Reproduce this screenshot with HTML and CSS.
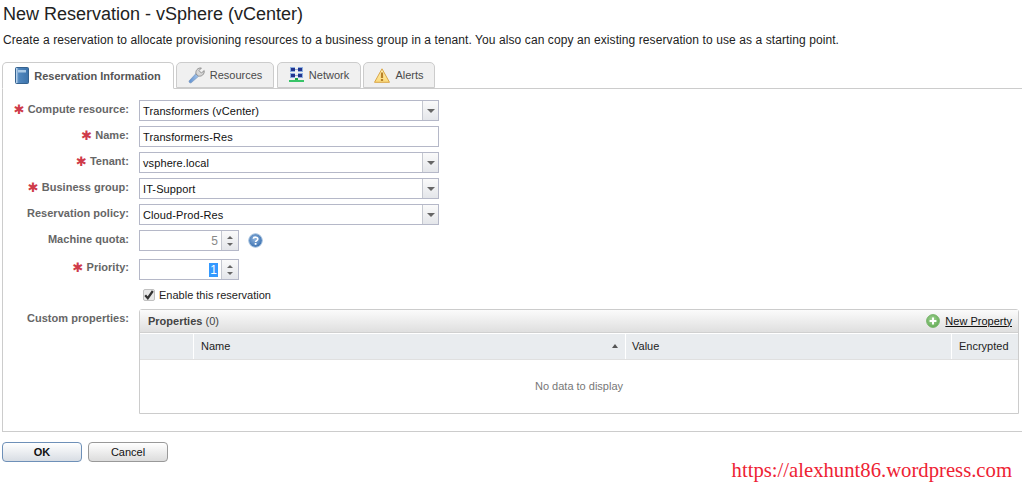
FILE: index.html
```html
<!DOCTYPE html>
<html lang="en">
<head>
<meta charset="utf-8">
<title>New Reservation</title>
<link rel="stylesheet" href="styles.css">
</head>
<body>
<h1 class="title">New Reservation - vSphere (vCenter)</h1>
<p class="desc">Create a reservation to allocate provisioning resources to a business group in a tenant. You also can copy an existing reservation to use as a starting point.</p>
<div class="tabs">
  <div class="tab tab-active tab-1">
    <svg class="ico" width="14" height="17" viewBox="0 0 14 17"><defs><linearGradient id="bk" x1="0" x2="1" y1="0" y2="0"><stop offset="0" stop-color="#7fa8d2"/><stop offset="0.3" stop-color="#4f86bd"/><stop offset="1" stop-color="#3c73ab"/></linearGradient></defs><rect x="0.5" y="0.5" width="13" height="16" rx="1" fill="url(#bk)" stroke="#35628f"/><rect x="3" y="3" width="8" height="2.5" fill="#a9c9e6"/><rect x="1" y="1" width="1.4" height="15" fill="#b5d0ea"/></svg>
    <span>Reservation Information</span>
  </div>
  <div class="tab tab-2">
    <svg class="ico" width="17" height="17" viewBox="0 0 17 17"><defs><linearGradient id="wr" x1="0" x2="1" y1="0" y2="0"><stop offset="0" stop-color="#5d8fd0"/><stop offset="1" stop-color="#a9c7ea"/></linearGradient></defs><path d="M3.2 15.8 C2 16.4 0.6 15.2 1.2 13.8 L8 6.6 L10.6 9.2Z" fill="url(#wr)" stroke="#7896bd" stroke-width="0.7"/><path d="M8 7 C7.2 3.6 9.6 0.6 13.4 1 L11 3.6 L13.4 6 L16.2 3.6 C16.6 7.2 13.8 9.8 10.4 9Z" fill="#d6d6d6" stroke="#8a8a8a" stroke-width="0.9" stroke-linejoin="round"/></svg>
    <span>Resources</span>
  </div>
  <div class="tab tab-3">
    <svg class="ico" width="15" height="16" viewBox="0 0 15 16"><rect x="1" y="0" width="5" height="5" fill="#8fb2e2"/><rect x="9" y="0" width="5" height="5" fill="#8fb2e2"/><rect x="1" y="6" width="5" height="5" fill="#8fb2e2"/><rect x="9" y="6" width="5" height="5" fill="#8fb2e2"/><rect x="2" y="1" width="4" height="3" fill="#23348f"/><rect x="9" y="1" width="4" height="3" fill="#23348f"/><rect x="2" y="7" width="4" height="3" fill="#23348f"/><rect x="9" y="7" width="4" height="3" fill="#23348f"/><rect x="6" y="2" width="3" height="1" fill="#9ab4d8"/><rect x="6" y="8" width="3" height="1" fill="#9ab4d8"/><rect x="6" y="11" width="3" height="2" fill="#1fa24a"/><rect x="0" y="13" width="15" height="2" fill="#38c468"/></svg>
    <span>Network</span>
  </div>
  <div class="tab tab-4">
    <svg class="ico" width="16" height="15" viewBox="0 0 16 15"><defs><linearGradient id="wn" x1="0" x2="0" y1="0" y2="1"><stop offset="0" stop-color="#fff3b8"/><stop offset="1" stop-color="#fbd979"/></linearGradient></defs><path d="M8 0.8 L15.5 14.3 H0.5Z" fill="url(#wn)" stroke="#d9a547" stroke-linejoin="round"/><rect x="6.9" y="4.5" width="2.2" height="5.5" fill="#b9822a"/><rect x="6.9" y="11" width="2.2" height="2" fill="#b9822a"/></svg>
    <span>Alerts</span>
  </div>
</div>
<div class="panel">
  <div class="form">
    <label class="lbl"><i class="req">✱</i>Compute resource:</label>
    <div class="field combo"><span class="val">Transformers (vCenter)</span><b class="arrow"></b></div>

    <label class="lbl"><i class="req">✱</i>Name:</label>
    <div class="field"><span class="val">Transformers-Res</span></div>

    <label class="lbl"><i class="req">✱</i>Tenant:</label>
    <div class="field combo"><span class="val">vsphere.local</span><b class="arrow"></b></div>

    <label class="lbl"><i class="req">✱</i>Business group:</label>
    <div class="field combo"><span class="val">IT-Support</span><b class="arrow"></b></div>

    <label class="lbl">Reservation policy:</label>
    <div class="field combo"><span class="val">Cloud-Prod-Res</span><b class="arrow"></b></div>

    <label class="lbl">Machine quota:</label>
    <div class="spin-row">
      <div class="field spin"><span class="num muted">5</span><div class="spinner"><u class="up"></u><u class="down"></u></div></div>
      <svg class="help" width="15" height="15" viewBox="0 0 15 15"><defs><radialGradient id="hg" cx="0.45" cy="0.4" r="0.6"><stop offset="0" stop-color="#8fb4de"/><stop offset="1" stop-color="#3a70b0"/></radialGradient></defs><circle cx="7.5" cy="7.5" r="6.8" fill="url(#hg)" stroke="#a9c4e0"/><path d="M5.3 5.8 C5.5 3.6 9.8 3.6 9.8 6 C9.8 7.6 7.6 7.6 7.6 9" fill="none" stroke="#fff" stroke-width="1.6"/><rect x="6.7" y="10" width="1.8" height="1.8" fill="#fff"/></svg>
    </div>

    <label class="lbl lbl-gap"><i class="req">✱</i>Priority:</label>
    <div class="spin-row row-gap">
      <div class="field spin"><span class="num"><em class="sel">1</em></span><div class="spinner"><u class="up"></u><u class="down"></u></div></div>
    </div>

    <div class="check-row">
      <span class="check"><svg width="10" height="10" viewBox="0 0 10 10"><path d="M1.2 5.2 L3.8 8.2 L8.8 1" fill="none" stroke="#333" stroke-width="2.2"/></svg></span>
      <span class="check-text">Enable this reservation</span>
    </div>

    <label class="lbl lbl-props">Custom properties:</label>
    <div class="props">
      <div class="props-head">
        <span class="props-title">Properties <span class="count">(0)</span></span>
        <span class="new-prop">
          <svg width="14" height="14" viewBox="0 0 14 14"><defs><radialGradient id="pg" cx="0.45" cy="0.4" r="0.65"><stop offset="0" stop-color="#a6d69a"/><stop offset="1" stop-color="#5da84e"/></radialGradient></defs><circle cx="7" cy="7" r="6.4" fill="url(#pg)" stroke="#7bb56e"/><path d="M7 3.6 V10.4 M3.6 7 H10.4" stroke="#fff" stroke-width="2"/></svg>
          <a class="link">New Property</a>
        </span>
      </div>
      <div class="cols">
        <div class="col c0"></div>
        <div class="col c1"><span>Name</span><b class="sort"></b></div>
        <div class="col c2">Value</div>
        <div class="col c3">Encrypted</div>
      </div>
      <div class="empty">No data to display</div>
    </div>
  </div>
</div>
<div class="actions">
  <button class="btn btn-ok">OK</button>
  <button class="btn">Cancel</button>
</div>
<div class="mark">https://alexhunt86.wordpress.com</div>
</body>
</html>
```
FILE: styles.css
```css
* { box-sizing: border-box; }
html, body { margin: 0; padding: 0; }
body {
  width: 1022px;
  height: 482px;
  overflow: hidden;
  position: relative;
  background: #fff;
  font-family: "Liberation Sans", Arial, sans-serif;
  font-size: 11px;
  color: #000;
}
.title {
  margin: 0;
  padding: 4px 0 0 3px;
  font-size: 18px;
  line-height: 20px;
  font-weight: normal;
  color: #222;
}
.desc {
  margin: 8px 0 0 3px;
  font-size: 12px;
  line-height: 16px;
  letter-spacing: 0.09px;
  color: #222;
}
.tabs {
  display: flex;
  height: 26px;
  margin: 14px 0 0 2px;
  position: relative;
  z-index: 1;
}
.tab {
  height: 26px;
  display: flex;
  align-items: center;
  justify-content: center;
  gap: 5px;
  border: 1px solid #ccc;
  border-radius: 5px 5px 0 0;
  background: #f0f0f0;
  font-size: 11px;
  color: #4a4a4a;
}
.ico { flex: none; }
.tab-active {
  background: #fff;
  border-bottom-color: #fff;
  font-weight: bold;
  height: 27px;
  color: #555;
}
.tab-1 { width: 172px; margin-right: 2px; }
.tab-2 { width: 98px; margin-right: 3px; }
.tab-3 { width: 84px; margin-right: 2px; }
.tab-4 { width: 72px; }
.panel {
  height: 344px;
  margin-left: 2px;
  border: 1px solid #ccc;
  border-right: 0;
  padding-top: 11px;
}
.form {
  display: grid;
  grid-template-columns: 126px 880px;
  column-gap: 10px;
  row-gap: 5px;
  justify-content: start;
}
.lbl {
  display: flex;
  justify-content: flex-end;
  align-items: center;
  height: 21px;
  padding-bottom: 3px;
  font-weight: bold;
  color: #666;
  white-space: nowrap;
  letter-spacing: 0.03px;
}
.lbl-gap { padding-bottom: 5px; }
.req {
  font-style: normal;
  font-weight: normal;
  font-family: "DejaVu Sans", sans-serif;
  color: #cf3b4a;
  font-size: 13px;
  line-height: 13px;
  margin-right: 3px;
}
.field {
  width: 300px;
  height: 21px;
  display: flex;
  align-items: center;
  background: #fff;
  border: 1px solid #b5b8c8;
  color: #111;
  position: relative;
}
.val { padding-left: 3px; letter-spacing: 0.1px; }
.arrow {
  margin-left: auto;
  width: 16px;
  height: 19px;
  border-left: 1px solid #c5c8d0;
  background: linear-gradient(#fafafa, #e4e6ea);
  display: flex;
  align-items: center;
  justify-content: center;
}
.arrow::after {
  content: "";
  border: 4px solid transparent;
  border-top: 4px solid #666;
  border-bottom: 0;
}
.spin-row { display: flex; align-items: center; gap: 9px; }
.row-gap, .lbl-gap { margin-top: 3px; }
.spin { width: 100px; }
.num {
  flex: 1;
  text-align: right;
  padding-right: 3px;
  font-size: 12px;
}
.muted { color: #888; }
.sel { font-style: normal; background: #3399ff; color: #fff; padding: 0 1px; }
.spinner {
  width: 17px;
  height: 19px;
  border-left: 1px solid #c5c8d0;
  background: linear-gradient(#fafafa, #e4e6ea);
  display: flex;
  flex-direction: column;
  align-items: center;
  justify-content: center;
  gap: 4px;
}
.up, .down { display: block; width: 0; height: 0; border: 3px solid transparent; }
.up { border-top: 0; border-bottom: 3px solid #666; }
.down { border-bottom: 0; border-top: 3px solid #666; }
.help { flex: none; }
.check-row {
  grid-column: 2;
  display: flex;
  align-items: center;
  height: 14px;
  margin-top: 3px;
  padding-left: 4px;
  gap: 4px;
}
.check {
  width: 12px;
  height: 12px;
  border: 1px solid #c0c0c0;
  border-radius: 2px;
  background: #e8e8e8;
  display: flex;
  align-items: center;
  justify-content: center;
}
.check-text { color: #222; }
.lbl-props { margin-top: 3px; height: 16px; padding: 0; }
.props {
  width: 880px;
  height: 105px;
  margin-top: 2px;
  border: 1px solid #ccc;
  border-radius: 3px 3px 0 0;
}
.props-head {
  height: 23px;
  display: flex;
  align-items: center;
  justify-content: space-between;
  padding: 0 6px 1px 8px;
  background: linear-gradient(#fbfbfb, #dfdfdf);
  border-bottom: 1px solid #d0d0d0;
}
.props-title { font-weight: bold; color: #444; }
.count { font-weight: normal; color: #444; }
.new-prop { display: flex; align-items: center; gap: 5px; }
.link { text-decoration: underline; color: #111; }
.cols {
  display: flex;
  height: 27px;
  border-top: 1px solid #fff;
  background: #fff;
  gap: 1px;
  border-bottom: 1px solid #e0e0e0;
}
.col {
  background: #e9ecef;
  display: flex;
  align-items: center;
  color: #222;
  padding: 0 0 1px 7px;
}
.c0 { width: 53px; }
.c1 { width: 431px; justify-content: space-between; padding-right: 7px; }
.c2 { width: 325px; padding-left: 6px; }
.c3 { flex: 1; padding-left: 7px; }
.sort { border: 3.5px solid transparent; border-bottom: 4px solid #555; border-top: 0; }
.empty {
  height: 53px;
  display: flex;
  align-items: center;
  justify-content: center;
  padding-bottom: 2px;
  color: #777;
}
.actions {
  display: flex;
  gap: 6px;
  margin: 10px 0 0 2px;
}
.btn {
  width: 80px;
  height: 20px;
  padding: 0;
  font: 11px "Liberation Sans", Arial, sans-serif;
  color: #111;
  border: 1px solid #999;
  border-radius: 4px;
  background: linear-gradient(#fff, #dcdcdc);
}
.btn-ok { border-color: #6e90b8; font-weight: bold; background: linear-gradient(#fff, #d8dde4); }
.mark {
  position: absolute;
  right: 10px;
  top: 458px;
  font-family: "Liberation Serif", serif;
  font-size: 20.7px;
  line-height: 24px;
  color: #ee2233;
}
```
